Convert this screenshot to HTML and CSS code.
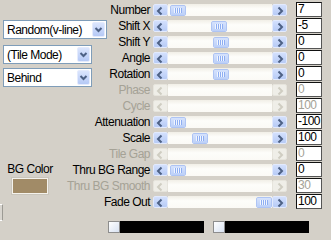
FILE: index.html
```html
<!DOCTYPE html>
<html lang="en">
<head>
    <meta charset="UTF-8">
    <title>Tile settings</title>
    <link rel="stylesheet" href="styles.css">
</head>
<body>

    <div class="part">
        <div class="side side-top">
            <div class="combo combo-wide"><span>Random(v-line)</span><i class="drop"><svg viewBox="0 0 11 13" width="11" height="13"><path d="M2.5 5 L5.5 8 L8.5 5" /></svg></i></div>
            <div class="combo combo-mode"><span>(Tile Mode)</span><i class="drop"><svg viewBox="0 0 11 13" width="11" height="13"><path d="M2.5 5 L5.5 8 L8.5 5" /></svg></i></div>
            <div class="combo combo-order"><span>Behind</span><i class="drop"><svg viewBox="0 0 11 13" width="11" height="13"><path d="M2.5 5 L5.5 8 L8.5 5" /></svg></i></div>
        </div>
        <div class="rows">
            <div class="row">
                <span class="lbl">Number</span>
                <div class="sbar">
                    <i class="btn"><svg viewBox="0 0 13 10" width="13" height="10"><path d="M7.5 1.5 L4 5 L7.5 8.5" /></svg></i>
                    <div class="track"><i class="thumb" style="margin-left: 2px"></i></div>
                    <i class="btn"><svg viewBox="0 0 13 10" width="13" height="10"><path d="M5.5 1.5 L9 5 L5.5 8.5" /></svg></i>
                </div>
                <div class="val">7</div>
            </div>
            <div class="row">
                <span class="lbl">Shift X</span>
                <div class="sbar">
                    <i class="btn"><svg viewBox="0 0 13 10" width="13" height="10"><path d="M7.5 1.5 L4 5 L7.5 8.5" /></svg></i>
                    <div class="track"><i class="thumb" style="margin-left: 43px"></i></div>
                    <i class="btn"><svg viewBox="0 0 13 10" width="13" height="10"><path d="M5.5 1.5 L9 5 L5.5 8.5" /></svg></i>
                </div>
                <div class="val">-5</div>
            </div>
            <div class="row">
                <span class="lbl">Shift Y</span>
                <div class="sbar">
                    <i class="btn"><svg viewBox="0 0 13 10" width="13" height="10"><path d="M7.5 1.5 L4 5 L7.5 8.5" /></svg></i>
                    <div class="track"><i class="thumb" style="margin-left: 45px"></i></div>
                    <i class="btn"><svg viewBox="0 0 13 10" width="13" height="10"><path d="M5.5 1.5 L9 5 L5.5 8.5" /></svg></i>
                </div>
                <div class="val">0</div>
            </div>
            <div class="row">
                <span class="lbl">Angle</span>
                <div class="sbar">
                    <i class="btn"><svg viewBox="0 0 13 10" width="13" height="10"><path d="M7.5 1.5 L4 5 L7.5 8.5" /></svg></i>
                    <div class="track"><i class="thumb" style="margin-left: 45px"></i></div>
                    <i class="btn"><svg viewBox="0 0 13 10" width="13" height="10"><path d="M5.5 1.5 L9 5 L5.5 8.5" /></svg></i>
                </div>
                <div class="val">0</div>
            </div>
            <div class="row">
                <span class="lbl">Rotation</span>
                <div class="sbar">
                    <i class="btn"><svg viewBox="0 0 13 10" width="13" height="10"><path d="M7.5 1.5 L4 5 L7.5 8.5" /></svg></i>
                    <div class="track"><i class="thumb" style="margin-left: 45px"></i></div>
                    <i class="btn"><svg viewBox="0 0 13 10" width="13" height="10"><path d="M5.5 1.5 L9 5 L5.5 8.5" /></svg></i>
                </div>
                <div class="val">0</div>
            </div>
            <div class="row off">
                <span class="lbl">Phase</span>
                <div class="sbar">
                    <i class="btn"><svg viewBox="0 0 13 10" width="13" height="10"><path d="M7.5 1.5 L4 5 L7.5 8.5" /></svg></i>
                    <div class="track"></div>
                    <i class="btn"><svg viewBox="0 0 13 10" width="13" height="10"><path d="M5.5 1.5 L9 5 L5.5 8.5" /></svg></i>
                </div>
                <div class="val">0</div>
            </div>
            <div class="row off">
                <span class="lbl">Cycle</span>
                <div class="sbar">
                    <i class="btn"><svg viewBox="0 0 13 10" width="13" height="10"><path d="M7.5 1.5 L4 5 L7.5 8.5" /></svg></i>
                    <div class="track"></div>
                    <i class="btn"><svg viewBox="0 0 13 10" width="13" height="10"><path d="M5.5 1.5 L9 5 L5.5 8.5" /></svg></i>
                </div>
                <div class="val">100</div>
            </div>
        </div>
    </div>

    <div class="part">
        <div class="side side-bottom">
            <div class="bg-label">BG Color</div>
            <div class="swatch"></div>
            <div class="stub"></div>
        </div>
        <div class="rows">
            <div class="row">
                <span class="lbl">Attenuation</span>
                <div class="sbar">
                    <i class="btn"><svg viewBox="0 0 13 10" width="13" height="10"><path d="M7.5 1.5 L4 5 L7.5 8.5" /></svg></i>
                    <div class="track"><i class="thumb" style="margin-left: 2px"></i></div>
                    <i class="btn"><svg viewBox="0 0 13 10" width="13" height="10"><path d="M5.5 1.5 L9 5 L5.5 8.5" /></svg></i>
                </div>
                <div class="val">-100</div>
            </div>
            <div class="row">
                <span class="lbl">Scale</span>
                <div class="sbar">
                    <i class="btn"><svg viewBox="0 0 13 10" width="13" height="10"><path d="M7.5 1.5 L4 5 L7.5 8.5" /></svg></i>
                    <div class="track"><i class="thumb" style="margin-left: 24px"></i></div>
                    <i class="btn"><svg viewBox="0 0 13 10" width="13" height="10"><path d="M5.5 1.5 L9 5 L5.5 8.5" /></svg></i>
                </div>
                <div class="val">100</div>
            </div>
            <div class="row off">
                <span class="lbl">Tile Gap</span>
                <div class="sbar">
                    <i class="btn"><svg viewBox="0 0 13 10" width="13" height="10"><path d="M7.5 1.5 L4 5 L7.5 8.5" /></svg></i>
                    <div class="track"></div>
                    <i class="btn"><svg viewBox="0 0 13 10" width="13" height="10"><path d="M5.5 1.5 L9 5 L5.5 8.5" /></svg></i>
                </div>
                <div class="val">0</div>
            </div>
            <div class="row">
                <span class="lbl">Thru BG Range</span>
                <div class="sbar">
                    <i class="btn"><svg viewBox="0 0 13 10" width="13" height="10"><path d="M7.5 1.5 L4 5 L7.5 8.5" /></svg></i>
                    <div class="track"><i class="thumb" style="margin-left: 2px"></i></div>
                    <i class="btn"><svg viewBox="0 0 13 10" width="13" height="10"><path d="M5.5 1.5 L9 5 L5.5 8.5" /></svg></i>
                </div>
                <div class="val">0</div>
            </div>
            <div class="row off">
                <span class="lbl">Thru BG Smooth</span>
                <div class="sbar">
                    <i class="btn"><svg viewBox="0 0 13 10" width="13" height="10"><path d="M7.5 1.5 L4 5 L7.5 8.5" /></svg></i>
                    <div class="track"></div>
                    <i class="btn"><svg viewBox="0 0 13 10" width="13" height="10"><path d="M5.5 1.5 L9 5 L5.5 8.5" /></svg></i>
                </div>
                <div class="val">30</div>
            </div>
            <div class="row">
                <span class="lbl">Fade Out</span>
                <div class="sbar">
                    <i class="btn"><svg viewBox="0 0 13 10" width="13" height="10"><path d="M7.5 1.5 L4 5 L7.5 8.5" /></svg></i>
                    <div class="track"><i class="thumb" style="margin-left: 88px"></i></div>
                    <i class="btn"><svg viewBox="0 0 13 10" width="13" height="10"><path d="M5.5 1.5 L9 5 L5.5 8.5" /></svg></i>
                </div>
                <div class="val">100</div>
            </div>
        </div>
    </div>

    <div class="bars">
        <div class="bar"><i class="knob"></i></div>
        <div class="bar"><i class="knob"></i></div>
    </div>

</body>
</html>
```

FILE: styles.css
```css
* {
    margin: 0;
    padding: 0;
    box-sizing: border-box;
}

body {
    width: 331px;
    height: 240px;
    overflow: hidden;
    padding-top: 2px;
    background-color: #d4d0c8;
    color: #000;
    font-family: "Liberation Sans", Arial, sans-serif;
    font-size: 12px;
    letter-spacing: -0.5px;
}

i {
    display: block;
}

.part {
    display: flex;
}

/* left side controls */
.side {
    display: flex;
    flex-direction: column;
}

.side > * {
    flex-shrink: 0;
}

.side-top {
    width: 108px;
    padding: 18px 0 0 3px;
}

.side-bottom {
    width: 60px;
    height: 96px;
    align-items: center;
}

.combo {
    height: 19px;
    width: 89px;
    margin-bottom: 4px;
    display: flex;
    align-items: center;
    justify-content: space-between;
    padding-left: 3px;
    background-color: #fff;
    border: 1px solid #7f9db9;
    white-space: nowrap;
}

.combo-wide {
    width: 104px;
    margin-bottom: 6px;
}

.drop {
    width: 13px;
    height: 15px;
    margin-right: 1px;
    background: linear-gradient(#dbe5fd, #b5c9f6);
    border: 1px solid #e4ebfd;
    border-radius: 2px;
}

.drop svg path {
    fill: none;
    stroke: #4d6185;
    stroke-width: 2;
}

.bg-label {
    margin-top: 49px;
    line-height: 13px;
}

.swatch {
    width: 36px;
    height: 16px;
    margin-top: 2px;
    background-color: #a18b67;
    border: 1px solid #f4f2ec;
    box-shadow: 0 0 0 1px #c9c5bb;
}

.stub {
    align-self: flex-start;
    width: 20px;
    height: 17px;
    margin: 10px 0 0 -17px;
    background-color: #d8d5cf;
    border: 1px solid #fff;
    border-right-color: #9c9a94;
}

/* slider rows */
.rows {
    flex: 1;
    display: flex;
    flex-direction: column;
}

.row {
    height: 16px;
    display: flex;
    align-items: flex-start;
    padding-right: 9px;
}

.lbl {
    flex: 1;
    min-width: 0;
    display: flex;
    justify-content: flex-end;
    padding-right: 3px;
    line-height: 16px;
    white-space: nowrap;
}

.row.off .lbl {
    color: #a5a296;
}

.sbar {
    width: 134px;
    height: 12px;
    margin-top: 2px;
    display: flex;
}

.btn {
    width: 15px;
    height: 12px;
    background: linear-gradient(#d3e0fd, #b7cbf6);
    border: 1px solid #e2eafd;
    border-radius: 2px;
}

.btn svg path {
    fill: none;
    stroke: #4d6185;
    stroke-width: 2;
}

.row.off .btn {
    background: #efeee8;
    border-color: #e6e4dc;
}

.row.off .btn svg path {
    stroke: #cfcdc2;
}

.track {
    flex: 1;
    display: flex;
    align-items: center;
    background: linear-gradient(#f1efe7, #fdfdfa 40%, #fbfaf6);
}

.thumb {
    width: 16px;
    height: 11px;
    background: linear-gradient(#d5e2fd, #bcd0f8) padding-box;
    border: 1px solid #aec4f4;
    border-radius: 2px;
    display: flex;
    align-items: center;
    justify-content: center;
}

.thumb::after {
    content: "";
    width: 8px;
    height: 5px;
    background: repeating-linear-gradient(90deg, #f0f5ff 0 1px, #8eaef2 1px 2px);
}

.val {
    width: 26px;
    height: 15px;
    margin-left: 9px;
    padding-left: 1px;
    line-height: 13px;
    background-color: #fff;
    border: 1px solid #111;
    border-right-color: #555;
    border-bottom-color: #555;
    white-space: nowrap;
    overflow: hidden;
}

.row.off .val {
    color: #a5a296;
}

/* bottom colour bars */
.bars {
    display: flex;
    gap: 9px;
    margin-top: 11px;
    padding-left: 108px;
}

.bar {
    width: 96px;
    height: 12px;
    background-color: #000;
}

.knob {
    width: 12px;
    height: 12px;
    background: linear-gradient(135deg, #fff, #d8e2f2);
    border: 1px solid #8d8d8d;
}
```
